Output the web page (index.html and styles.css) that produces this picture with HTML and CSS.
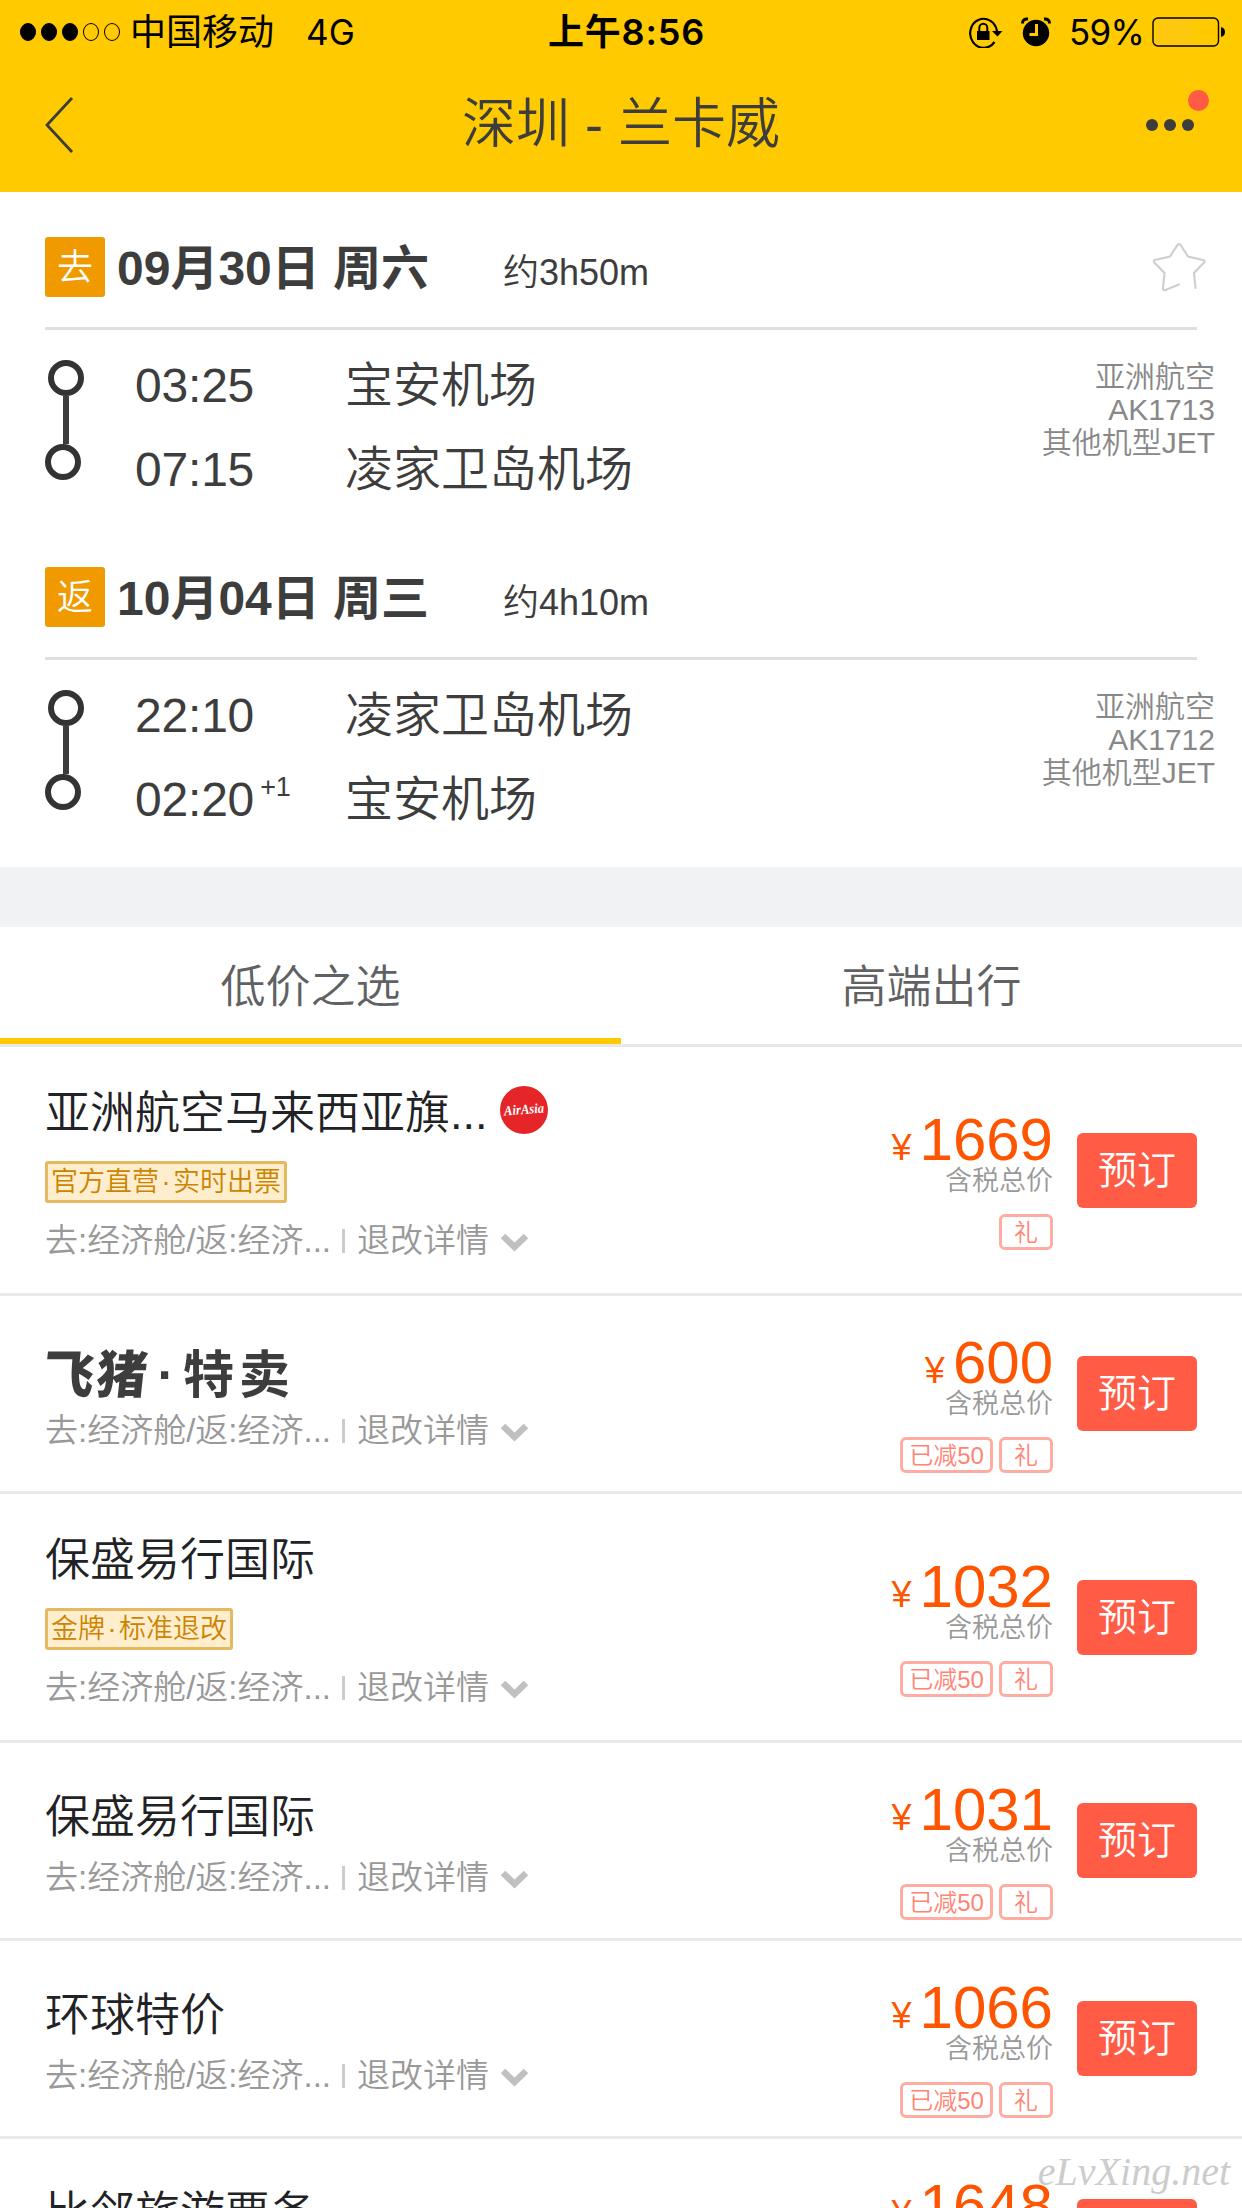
FILE: index.html
```html
<!DOCTYPE html>
<html lang="zh-CN">
<head>
    <meta charset="UTF-8">
    <meta name="viewport" content="width=device-width, initial-scale=1.0">
    <title>深圳 - 兰卡威</title>
    <link rel="stylesheet" href="styles.css">
</head>
<body>
    <svg width="0" height="0" class="defs">
        <symbol id="arrow" viewBox="0 0 29 20">
            <path d="M3 4 L14.5 15 L26 4" fill="none" stroke="#bfc1c1" stroke-width="6.5"/>
        </symbol>
        <symbol id="star" viewBox="0 0 54 50">
            <path d="M43.500 46 L42 31 L52 20.500 Q53.500 18.500 51 18 L36 14.500 L28.500 3 Q27 1 25.500 3 L18 14.500 L3 18 Q0.800 18.500 2.300 20.500 L12.500 31 L11 46 Q11 49 13.500 48 L27 42.500" fill="none" stroke="#cfcfcf" stroke-width="2.200" stroke-linecap="round"/>
        </symbol>
    </svg>

    <div class="header">
        <div class="status">
            <div class="status-left">
                <span class="signal"><i class="on"></i><i class="on"></i><i class="on"></i><i></i><i></i></span>
                <span class="carrier">中国移动</span>
                <span>4G</span>
            </div>
            <div class="status-time">上午8:56</div>
            <div class="status-right">
                <svg class="lock" width="35" height="32" viewBox="0 0 35 32">
                    <path d="M26.500 26 A13.500 14.500 0 1 1 29 15" fill="none" stroke="#000" stroke-width="2.200"/>
                    <path d="M24 15 h10.500 l-5 5.500 z"/>
                    <path d="M9 15 h12.500 v9 h-12.500 z"/>
                    <path d="M11.300 15 v-3 a4 4.300 0 0 1 8 0 v3" fill="none" stroke="#000" stroke-width="2"/>
                </svg>
                <svg class="alarm" width="30" height="30" viewBox="0 0 30 30">
                    <circle cx="15" cy="16" r="13.200"/>
                    <path d="M1.500 6.500 Q1.500 1.500 7 2 M28.500 6.500 Q28.500 1.500 23 2" fill="none" stroke="#000" stroke-width="3"/>
                    <path d="M15.500 7 v10.500 h-7" fill="none" stroke="#ffca00" stroke-width="3"/>
                </svg>
                <span class="percent">59%</span>
                <svg class="battery" width="74" height="30" viewBox="0 0 74 30">
                    <rect x="3" y="3" width="38" height="24" fill="#fdc80d"/>
                    <rect x="1" y="1" width="65.500" height="28" rx="5" fill="none" stroke="#000" stroke-width="1.400"/>
                    <path d="M69 10 q4 1 4 5 q0 4 -4 5 z"/>
                </svg>
            </div>
        </div>
        <div class="nav">
            <svg width="30" height="58" viewBox="0 0 30 58">
                <path d="M28 2 L3 29 L28 56" fill="none" stroke="#3d3d3d" stroke-width="2.800"/>
            </svg>
            <h1>深圳 - 兰卡威</h1>
            <div class="more"><i></i><i></i><i></i><b class="red-dot"></b></div>
        </div>
    </div>

    <div class="flights">
        <div class="flight">
            <div class="flight-head">
                <span class="way">去</span>
                <span class="date">09月30日 周六</span>
                <span class="duration">约3h50m</span>
                <svg class="star" width="54" height="50"><use href="#star"/></svg>
            </div>
            <div class="flight-body">
                <div class="route"><i></i><b></b><i class="end"></i></div>
                <div class="stops">
                    <div class="time">03:25</div>
                    <div>宝安机场</div>
                    <div class="time">07:15</div>
                    <div>凌家卫岛机场</div>
                </div>
                <div class="airline">亚洲航空<br>AK1713<br>其他机型JET</div>
            </div>
        </div>
        <div class="flight">
            <div class="flight-head">
                <span class="way">返</span>
                <span class="date">10月04日 周三</span>
                <span class="duration">约4h10m</span>
            </div>
            <div class="flight-body">
                <div class="route"><i></i><b></b><i class="end"></i></div>
                <div class="stops">
                    <div class="time">22:10</div>
                    <div>凌家卫岛机场</div>
                    <div class="time">02:20<span class="plus">+1</span></div>
                    <div>宝安机场</div>
                </div>
                <div class="airline">亚洲航空<br>AK1712<br>其他机型JET</div>
            </div>
        </div>
    </div>

    <div class="tabs">
        <div class="tab active">低价之选</div>
        <div class="tab">高端出行</div>
    </div>

    <div class="list">
        <div class="item tall">
            <div class="info">
                <div class="name">亚洲航空马来西亚旗...
                    <svg class="airasia" width="48" height="48" viewBox="0 0 48 48">
                        <circle cx="24" cy="24" r="24" fill="#e52528"/>
                        <text x="24" y="28" text-anchor="middle" textLength="40" lengthAdjust="spacingAndGlyphs" transform="rotate(-4 24 24)">AirAsia</text>
                    </svg>
                </div>
                <div class="badge">官方直营<s>·</s>实时出票</div>
                <div class="detail"><span>去:经济舱/返:经济...</span><i></i><span>退改详情</span><svg width="29" height="20"><use href="#arrow"/></svg></div>
            </div>
            <div class="cost">
                <div class="price"><small>¥</small>1669</div>
                <div class="tax">含税总价</div>
                <div class="tags"><span class="gift">礼</span></div>
            </div>
            <button class="book">预订</button>
        </div>
        <div class="item">
            <div class="info">
                <div class="name fliggy"><em>飞猪</em><span class="mid">·</span><span class="sale">特卖</span></div>
                <div class="detail"><span>去:经济舱/返:经济...</span><i></i><span>退改详情</span><svg width="29" height="20"><use href="#arrow"/></svg></div>
            </div>
            <div class="cost">
                <div class="price"><small>¥</small>600</div>
                <div class="tax">含税总价</div>
                <div class="tags"><span>已减50</span><span class="gift">礼</span></div>
            </div>
            <button class="book">预订</button>
        </div>
        <div class="item tall">
            <div class="info">
                <div class="name">保盛易行国际</div>
                <div class="badge">金牌<s>·</s>标准退改</div>
                <div class="detail"><span>去:经济舱/返:经济...</span><i></i><span>退改详情</span><svg width="29" height="20"><use href="#arrow"/></svg></div>
            </div>
            <div class="cost">
                <div class="price"><small>¥</small>1032</div>
                <div class="tax">含税总价</div>
                <div class="tags"><span>已减50</span><span class="gift">礼</span></div>
            </div>
            <button class="book">预订</button>
        </div>
        <div class="item">
            <div class="info">
                <div class="name">保盛易行国际</div>
                <div class="detail"><span>去:经济舱/返:经济...</span><i></i><span>退改详情</span><svg width="29" height="20"><use href="#arrow"/></svg></div>
            </div>
            <div class="cost">
                <div class="price"><small>¥</small>1031</div>
                <div class="tax">含税总价</div>
                <div class="tags"><span>已减50</span><span class="gift">礼</span></div>
            </div>
            <button class="book">预订</button>
        </div>
        <div class="item">
            <div class="info">
                <div class="name">环球特价</div>
                <div class="detail"><span>去:经济舱/返:经济...</span><i></i><span>退改详情</span><svg width="29" height="20"><use href="#arrow"/></svg></div>
            </div>
            <div class="cost">
                <div class="price"><small>¥</small>1066</div>
                <div class="tax">含税总价</div>
                <div class="tags"><span>已减50</span><span class="gift">礼</span></div>
            </div>
            <button class="book">预订</button>
        </div>
        <div class="item">
            <div class="info">
                <div class="name">比邻旅游票务</div>
            </div>
            <div class="cost">
                <div class="price"><small>¥</small>1648</div>
            </div>
            <button class="book">预订</button>
        </div>
    </div>
    <div class="watermark">eLvXing.net</div>
</body>
</html>
```
FILE: styles.css
```css
* {
    box-sizing: border-box;
}
body {
    font-family: "Liberation Sans", "Noto Sans CJK SC", sans-serif;
    font-weight: 350;
    margin: 0;
    width: 1242px;
    height: 2208px;
    overflow: hidden;
    position: relative;
    background-color: #fff;
    color: #3d3d3d;
}
i, em {
    font-style: normal;
}
svg {
    display: block;
    flex: none;
}
.defs {
    position: absolute;
}

/* Header */
.header {
    height: 192px;
    background: #ffca00;
}
.status {
    display: grid;
    grid-template-columns: 1fr auto 1fr;
    align-items: center;
    height: 60px;
    padding: 2px 16px 0 20px;
    font-family: Inter, "Noto Sans CJK SC", sans-serif;
    font-size: 35px;
    font-weight: 400;
    line-height: 60px;
    color: #000;
}
.status-left, .status-right {
    display: flex;
    align-items: center;
}
.status-right {
    justify-content: flex-end;
}
.signal {
    display: flex;
    gap: 5px;
    margin-right: 10px;
}
.signal i {
    width: 16px;
    height: 18px;
    border: 1px solid #000;
    border-radius: 50%;
}
.signal .on {
    background: #000;
}
.carrier {
    font-size: 36px;
    margin-right: 32px;
}
.status-time {
    font-weight: 600;
    font-size: 36px;
    letter-spacing: 0.8px;
    padding-left: 7px;
}
.lock {
    margin-right: 18px;
}
.alarm {
    margin-right: 18px;
}
.percent {
    letter-spacing: -0.8px;
}
.battery {
    margin-left: 8px;
}
.nav {
    display: grid;
    grid-template-columns: 1fr auto 1fr;
    align-items: center;
    height: 132px;
    padding: 0 48px 2px 44px;
}
.nav h1 {
    margin: 0;
    font-size: 54px;
    font-weight: inherit;
    line-height: 80px;
    padding: 0 0 3px 4px;
}
.more {
    display: flex;
    gap: 6px;
    justify-self: end;
    position: relative;
}
.more i {
    width: 12px;
    height: 12px;
    border-radius: 50%;
    background: #3d3d3d;
}
.red-dot {
    position: absolute;
    right: -15px;
    top: -29px;
    width: 21px;
    height: 21px;
    border-radius: 50%;
    background: #ff5b45;
}

/* Flights */
.flights {
    height: 675px;
    padding-top: 45px;
}
.flight {
    height: 330px;
}
.flight-head {
    display: flex;
    align-items: center;
    height: 93px;
    margin: 0 45px;
    padding-bottom: 30px;
    border-bottom: 3px solid #dfdfdf;
}
.way {
    width: 60px;
    height: 60px;
    border-radius: 3px;
    background: #f09a00;
    color: #fff;
    font-size: 36px;
    line-height: 61px;
    text-align: center;
}
.date {
    width: 398px;
    flex: none;
    padding: 4px 0 0 12px;
    font-size: 48px;
    font-weight: bold;
    line-height: 60px;
}
.duration {
    font-size: 36px;
    line-height: 60px;
    padding-top: 11px;
}
.star {
    margin: 0 -9px 0 auto;
}
.flight-body {
    display: flex;
    padding: 30px 27px 0 45px;
}
.route {
    display: flex;
    flex-direction: column;
    width: 90px;
}
.route i {
    width: 36px;
    height: 36px;
    margin-left: 3px;
    border: 6px solid #333;
    border-radius: 50%;
}
.route b {
    width: 6px;
    height: 48px;
    margin-left: 18px;
    background: #3d3d3d;
}
.route .end {
    margin-left: 0;
}
.stops {
    display: grid;
    grid-template-columns: 210px 1fr;
    grid-auto-rows: 84px;
    font-size: 48px;
    line-height: 52px;
    flex: 1;
}
.time {
    display: flex;
    letter-spacing: -0.2px;
}
.plus {
    font-size: 27px;
    line-height: 26px;
    margin-left: 6px;
}
.airline {
    font-size: 30px;
    line-height: 33px;
    color: #888;
    text-align: right;
}

/* Tabs */
.tabs {
    display: flex;
    height: 180px;
    border-top: 60px solid #f0f2f4;
    border-bottom: 3px solid #e8e8e8;
}
.tab {
    flex: 1;
    font-size: 45px;
    line-height: 121px;
    color: #5f6163;
    text-align: center;
}
.active {
    border-bottom: 6px solid #ffca00;
}

/* Ticket list */
.item {
    display: flex;
    align-items: center;
    height: 198px;
    padding: 0 45px;
    border-bottom: 3px solid #e8e9e9;
}
.tall {
    height: 249px;
}
.info {
    display: flex;
    flex-direction: column;
    align-items: flex-start;
    flex: 1;
    gap: 13px;
    height: 108px;
}
.tall .info {
    gap: 19px;
    height: 176px;
}
.name {
    display: flex;
    align-items: center;
    gap: 12px;
    height: 60px;
    font-size: 45px;
    line-height: 60px;
    padding-top: 3px;
    color: #1f2326;
    white-space: nowrap;
}
.airasia {
    margin-bottom: 7px;
}
.airasia text {
    font: italic bold 14px "Liberation Serif", serif;
    fill: #fff;
}
.fliggy {
    gap: 0;
    padding-top: 12px;
    font-weight: 900;
    font-size: 51px;
    color: #3d3d3d;
}
.fliggy em {
    margin-left: -2px;
    transform: skewX(-6deg);
    letter-spacing: 2px;
}
.mid {
    width: 34px;
    text-align: center;
}
.sale {
    font-weight: 700;
    letter-spacing: 5px;
}
.badge {
    height: 42px;
    padding: 0 3px;
    border: 3px solid #e6b860;
    border-radius: 3px;
    background: #ffeecd;
    color: #cc8400;
    font-size: 27px;
    line-height: 37px;
}
.badge s {
    display: inline-block;
    width: 14px;
    text-align: center;
    text-decoration: none;
}
.detail {
    display: flex;
    align-items: center;
    height: 36px;
    font-size: 33px;
    line-height: 36px;
    padding-top: 1px;
    color: #999;
}
.detail i {
    width: 3px;
    height: 24px;
    margin: 0 12px 0 11px;
    background: #ccc;
}
.detail svg {
    margin: 2px 0 0 11px;
}
.cost {
    display: flex;
    flex-direction: column;
    align-items: flex-end;
    height: 159px;
    margin-right: 24px;
    padding-top: 19px;
}
.price {
    display: flex;
    align-items: baseline;
    gap: 8px;
    height: 56px;
    font-size: 60px;
    line-height: 60px;
    color: #ff5500;
}
.price small {
    font-size: 36px;
}
.tax {
    font-size: 27px;
    line-height: 30px;
    color: #999;
}
.tags {
    display: flex;
    gap: 6px;
    margin-top: 18px;
}
.tags span {
    width: 93px;
    height: 36px;
    border: 3px solid #ffada2;
    border-radius: 6px;
    color: #ff8474;
    font-size: 24px;
    line-height: 31px;
    text-align: center;
}
.tags .gift {
    width: 54px;
}
.book {
    width: 120px;
    height: 75px;
    padding: 0;
    border: none;
    border-radius: 6px;
    background: #ff5b45;
    color: #fff;
    font-family: inherit;
    font-weight: inherit;
    font-size: 39px;
    line-height: 75px;
}
.watermark {
    position: absolute;
    right: 12px;
    bottom: 12px;
    font: italic 40px "Liberation Serif", cursive;
    line-height: 48px;
    color: #ccc;
}
```
